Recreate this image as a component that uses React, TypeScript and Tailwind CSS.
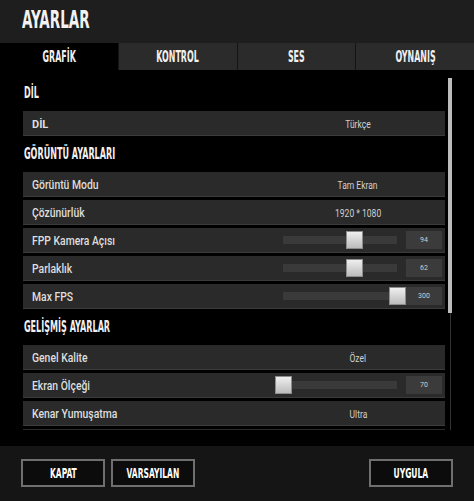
import React from 'react';

// ayarlar ekranı - grafik sekmesi
const tabs = ['GRAFİK', 'KONTROL', 'SES', 'OYNANIŞ'];

type Row =
  | { kind: 'text'; label: string; value: string }
  | { kind: 'slider'; label: string; value: number; pos: number };

const sections: { title: string; rows: Row[] }[] = [
  { title: 'DİL', rows: [{ kind: 'text', label: 'DİL', value: 'Türkçe' }] },
  {
    title: 'GÖRÜNTÜ AYARLARI',
    rows: [
      { kind: 'text', label: 'Görüntü Modu', value: 'Tam Ekran' },
      { kind: 'text', label: 'Çözünürlük', value: '1920 * 1080' },
      { kind: 'slider', label: 'FPP Kamera Açısı', value: 94, pos: 0.62 },
      { kind: 'slider', label: 'Parlaklık', value: 62, pos: 0.625 },
      { kind: 'slider', label: 'Max FPS', value: 300, pos: 1 },
    ],
  },
  {
    title: 'GELİŞMİŞ AYARLAR',
    rows: [
      { kind: 'text', label: 'Genel Kalite', value: 'Özel' },
      { kind: 'slider', label: 'Ekran Ölçeği', value: 70, pos: 0 },
      { kind: 'text', label: 'Kenar Yumuşatma', value: 'Ultra' },
    ],
  },
];

const cond = "font-['DejaVu_Sans_Condensed',sans-serif] font-bold";

const SettingRow = ({ row }: { row: Row }) => (
  <div className="mt-[3px] flex h-[25px] w-[422px] shrink-0 items-center border-b border-[#3b3b3b] bg-[#2a2a2a]">
    <div className="flex-1 pl-[9px]">
      {row.label === 'DİL' ? (
        <span className="inline-block text-[11px] font-bold text-[#dedede]">{row.label}</span>
      ) : (
        <span className="inline-block origin-left scale-x-[0.83] whitespace-nowrap text-[12.5px] font-medium text-[#dedede]">
          {row.label}
        </span>
      )}
    </div>
    {row.kind === 'text' ? (
      <span className="w-[174px] text-center">
        <span className="inline-block scale-x-[0.85] whitespace-nowrap text-[10px] text-[#d0d0d0]">{row.value}</span>
      </span>
    ) : (
      <div className="flex items-center">
        <div className="relative h-[8px] w-[114px] bg-[#3a3a3a]">
          <div
            className="absolute top-[-5px] h-[18px] w-[17px] border border-[#8d8d8d] bg-gradient-to-b from-[#efefef] to-[#bcbcbc]"
            style={{ left: Math.round(row.pos * 114) - 8 }}
          />
        </div>
        <div className="ml-[9px] mr-[3px] flex h-[18px] w-[36px] items-center justify-center bg-[#3b3b3b] text-[7px] text-[#cfcfcf]">
          {row.value}
        </div>
      </div>
    )}
  </div>
);

export default function App() {
  return (
    <div className="flex h-[501px] w-[474px] flex-col overflow-hidden bg-black font-['Roboto',sans-serif]">
      <div className="flex h-[43px] shrink-0 items-center bg-[#1e1e1e] pb-[5px] pl-[22px]">
        <span className={`${cond} inline-block origin-left scale-x-[0.6] text-[25px] leading-none text-[#f2f2f2]`}>
          AYARLAR
        </span>
      </div>

      <div className="flex h-[27px] shrink-0">
        {tabs.map((t, i) => (
          <div
            key={t}
            className={`flex flex-1 items-center justify-center overflow-hidden ${
              i === 0 ? 'bg-black' : 'border-l border-[#141414] bg-[#2b2b2b]'
            }`}
          >
            <span className={`${cond} inline-block scale-x-[0.55] text-[16px] leading-none text-[#f0f0f0]`}>{t}</span>
          </div>
        ))}
      </div>

      <div className="relative h-[376px] shrink-0 bg-black">
        <div className="flex h-[360px] flex-col overflow-hidden pl-[23px] pt-[5px]">
          {sections.map((s) => (
            <React.Fragment key={s.title}>
              <div className="flex h-[33px] shrink-0 items-center pl-[1px] pt-[2px]">
                <span className={`${cond} inline-block origin-left scale-x-[0.56] text-[16px] leading-none text-[#f0f0f0]`}>
                  {s.title}
                </span>
              </div>
              {s.rows.map((r) => (
                <SettingRow key={r.label} row={r} />
              ))}
            </React.Fragment>
          ))}
          {/* sonraki satırın üst kenarı, kaydırma alanında kesiliyor */}
          <div className="mt-[3px] h-[4px] w-[422px] shrink-0 bg-[#2a2a2a]" />
        </div>
        {/* kaydırma çubuğu */}
        <div className="absolute left-[450px] top-[8px] h-[352px] w-px bg-[#333]" />
        <div className="absolute left-[448px] top-[8px] h-[235px] w-[4px] bg-[#bdbdbd]" />
      </div>

      <div className="flex flex-1 items-center bg-[#151515] px-[21px] pb-[1px]">
        {['KAPAT', 'VARSAYILAN'].map((b) => (
          <button
            key={b}
            className="mr-[6px] flex h-[28px] w-[84px] items-center justify-center border-2 border-[#6f6f6f] bg-[#0c0c0c]"
          >
            <span className={`${cond} inline-block scale-x-[0.6] text-[14px] leading-none text-white`}>{b}</span>
          </button>
        ))}
        <button className="ml-auto flex h-[28px] w-[84px] items-center justify-center border-2 border-[#6f6f6f] bg-[#0c0c0c]">
          <span className={`${cond} inline-block scale-x-[0.6] text-[14px] leading-none text-white`}>UYGULA</span>
        </button>
      </div>
    </div>
  );
}
